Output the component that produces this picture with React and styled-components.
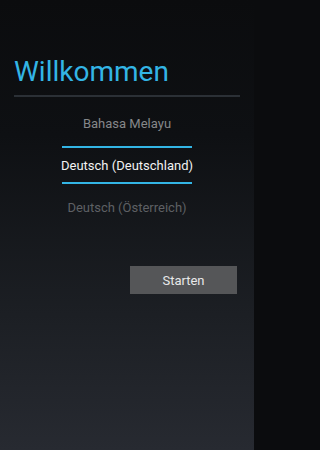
import React from 'react';
import styled, { createGlobalStyle } from 'styled-components';

const Global = createGlobalStyle`
  html, body { margin: 0; padding: 0; }
  body { font-family: Roboto, "Noto Sans", sans-serif; background: #0b0c0e; }
`;

const Screen = styled.div`
  width: 254px;
  height: 450px;
  background: linear-gradient(to bottom, #0b0c0e 0%, #0e1013 30%, #1c1f24 70%, #272a31 100%);
  display: flex;
  flex-direction: column;
  overflow: hidden;
`;

const Header = styled.div`
  margin: 0 14px;
  padding-top: 55px;
  border-bottom: 2px solid #2b3036;
  padding-bottom: 6px;
`;

const Title = styled.h1`
  margin: 0;
  font-size: 28px;
  font-weight: 400;
  line-height: 34px;
  color: #33b5e5;
`;

const Picker = styled.div`
  display: flex;
  flex-direction: column;
  align-items: center;
  margin-top: 5px;
`;

const Item = styled.div`
  width: 130px;
  display: flex;
  align-items: center;
  justify-content: center;
  white-space: nowrap;
  font-size: 13px;
  color: ${p => p.$color};
  border-top: ${p => (p.$selected ? '2px solid #33b5e5' : 'none')};
  border-bottom: ${p => (p.$selected ? '2px solid #33b5e5' : 'none')};
  box-sizing: border-box;
  height: ${p => (p.$selected ? '38px' : '42px')};
  margin: ${p => (p.$selected ? '2px 0' : '0')};
`;

const Actions = styled.div`
  display: flex;
  justify-content: flex-end;
  padding: 0 17px 0 0;
  margin-top: 38px;
`;

const Button = styled.button`
  width: 107px;
  height: 28px;
  border: none;
  background: #555658;
  color: #e8e8e8;
  font-family: Roboto, "Noto Sans", sans-serif;
  font-size: 13px;
  padding: 0;
`;

export default function App() {
  return (
    <>
      <Global />
      <Screen>
        <Header>
          <Title>Willkommen</Title>
        </Header>
        <Picker>
          <Item $color="#85878a">Bahasa Melayu</Item>
          <Item $color="#f2f2f2" $selected>Deutsch (Deutschland)</Item>
          <Item $color="#5e6064">Deutsch (Österreich)</Item>
        </Picker>
        <Actions>
          <Button>Starten</Button>
        </Actions>
      </Screen>
    </>
  );
}
